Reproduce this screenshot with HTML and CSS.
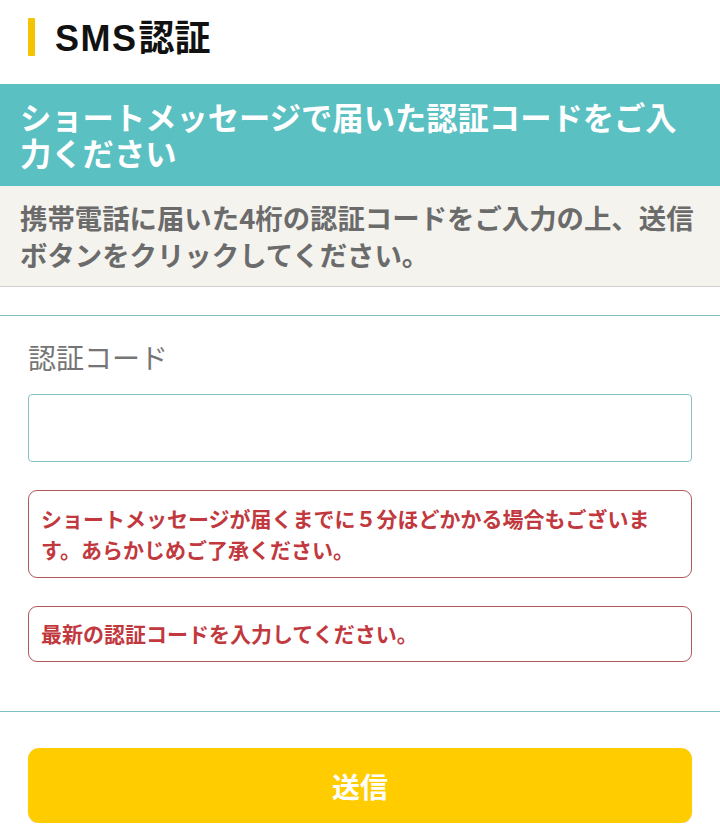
FILE: index.html
```html
<!DOCTYPE html>
<html lang="ja">
<head>
<meta charset="utf-8">
<title>SMS認証</title>
<link rel="stylesheet" href="styles.css">
</head>
<body>
<header class="page-head">
  <span class="head-bar"></span>
  <h1 class="page-title"><span class="latin">SMS</span>認証</h1>
</header>
<h2 class="lead">ショートメッセージで届いた認証コードをご入力ください</h2>
<p class="note">携帯電話に届いた4桁の認証コードをご入力の上、送信ボタンをクリックしてください。</p>
<section class="form-area">
  <label class="field-label" for="code">認証コード</label>
  <input class="field-input" id="code" type="text">
  <div class="alert">ショートメッセージが届くまでに５分ほどかかる場合もございます。あらかじめご了承ください。</div>
  <div class="alert">最新の認証コードを入力してください。</div>
</section>
<div class="submit-area">
  <button class="submit-btn" type="button">送信</button>
</div>
</body>
</html>
```
FILE: styles.css
```css
* { box-sizing: border-box; }
html, body { margin: 0; padding: 0; background: #fff; }
body {
  font-family: "Noto Sans CJK JP", "Noto Sans", sans-serif;
  width: 720px;
}
.page-head {
  height: 84px;
  display: flex;
  align-items: center;
  padding-left: 28px;
  padding-bottom: 10px;
  gap: 20px;
}
.head-bar {
  width: 7px;
  height: 38px;
  background: #f5c400;
  border-radius: 1px;
}
.page-title {
  margin: 0;
  font-size: 36px;
  font-weight: 700;
  color: #111;
  line-height: 40px;
}
.page-title .latin {
  font-family: "Liberation Sans", "Noto Sans CJK JP", sans-serif;
  letter-spacing: 1.5px;
  margin-right: 1px;
}
.lead {
  margin: 0;
  background: #5bc0c2;
  color: #fff;
  font-size: 31.3px;
  font-weight: 700;
  line-height: 36px;
  padding: 15px 20px;
}
.note {
  margin: 0;
  background: #f4f3ee;
  color: #6b6b6b;
  font-size: 27.4px;
  font-weight: 700;
  line-height: 37px;
  padding: 13px 20px;
  border-bottom: 1px solid #cfcfcf;
}
.form-area {
  margin-top: 28px;
  border-top: 1px solid #80bfc3;
  border-bottom: 1px solid #80bfc3;
  padding: 21px 28px 49px;
  display: flex;
  flex-direction: column;
}
.field-label {
  font-size: 28px;
  line-height: 40px;
  color: #757575;
  font-weight: 400;
}
.field-input {
  margin-top: 17px;
  height: 68px;
  border: 1px solid #86c3c7;
  border-radius: 4px;
  background: #fff;
  font-size: 24px;
  padding: 0 12px;
}
.alert {
  margin-top: 28px;
  border: 1px solid #b2575a;
  border-radius: 9px;
  padding: 12px 10px 12px 12px;
  color: #c1393e;
  font-size: 21px;
  font-weight: 700;
  line-height: 31px;
}
.alert + .alert { padding-top: 11px; padding-bottom: 12px; }
.submit-area {
  padding: 36px 28px 0;
}
.submit-btn {
  display: block;
  width: 100%;
  height: 75px;
  border: none;
  border-radius: 11px;
  background: #ffcc00;
  color: #fff;
  font-family: "Noto Sans CJK JP", "Noto Sans", sans-serif;
  font-size: 28px;
  font-weight: 700;
  box-shadow: 0 1px 2px rgba(0,0,0,0.08);
}
```
